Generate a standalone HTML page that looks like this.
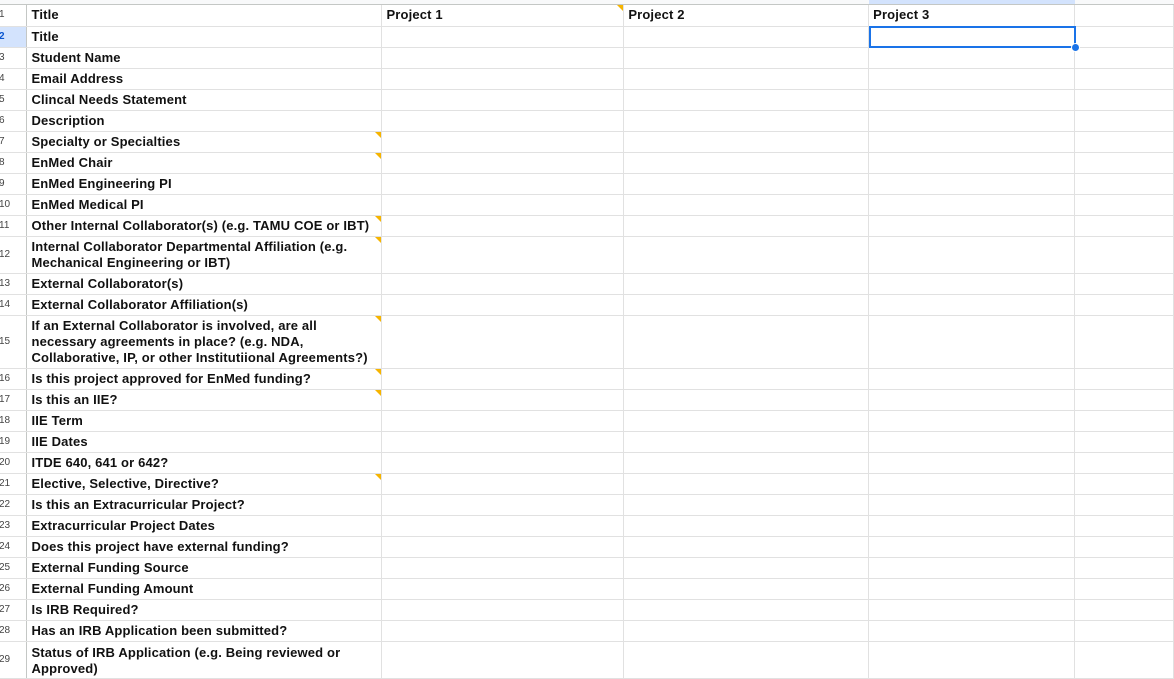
<!DOCTYPE html>
<html><head><style>
body{margin:0;width:1174px;height:665px;overflow:hidden;background:#fff;font-family:"Liberation Sans",Arial,sans-serif;position:relative}
.hdr{position:absolute;left:0;top:0;width:1174px;height:4px;background:#f8f9fa;border-bottom:1px solid #c4c7c5}
table{position:absolute;left:0;top:5px;border-collapse:collapse;table-layout:fixed}
td{border:1px solid #e1e1e1;padding:0 0 0 4px;font-size:13px;font-weight:bold;color:#111;vertical-align:middle;line-height:16px;position:relative;overflow:visible;letter-spacing:0.15px;white-space:nowrap}
td.n{font-weight:normal;font-size:10px;color:#444;padding-left:0;border-left:none;background:#fff;border-right:1px solid #c4c7c5;text-indent:-1px;letter-spacing:0}
tr:first-child td{border-top:none}
.t::after{content:"";position:absolute;right:0;top:0;border-top:6px solid #f6b400;border-left:6px solid transparent}
.sel{position:absolute;left:869px;top:26px;width:203px;height:18px;border:2px solid #1a73e8}
.dot{position:absolute;left:1071px;top:43px;width:7px;height:7px;border-radius:50%;background:#1a73e8;border:1px solid #fff}
</style></head><body>
<div class="hdr"></div>
<div style="position:absolute;left:869px;top:0;width:206px;height:4px;background:#d3e3fd"></div>
<table>
<colgroup><col style="width:27px"><col style="width:355px"><col style="width:242px"><col style="width:245px"><col style="width:206px"><col style="width:99px"></colgroup>
<tr style="height:21px"><td class="n">1</td><td>Title</td><td class="t">Project 1</td><td>Project 2</td><td>Project 3</td><td></td></tr>
<tr style="height:21px"><td class="n" style="background:#d3e3fd;font-weight:bold;color:#0b57d0">2</td><td>Title</td><td></td><td></td><td></td><td></td></tr>
<tr style="height:21px"><td class="n">3</td><td>Student Name</td><td></td><td></td><td></td><td></td></tr>
<tr style="height:21px"><td class="n">4</td><td>Email Address</td><td></td><td></td><td></td><td></td></tr>
<tr style="height:21px"><td class="n">5</td><td>Clincal Needs Statement</td><td></td><td></td><td></td><td></td></tr>
<tr style="height:21px"><td class="n">6</td><td>Description</td><td></td><td></td><td></td><td></td></tr>
<tr style="height:21px"><td class="n">7</td><td class="t">Specialty or Specialties</td><td></td><td></td><td></td><td></td></tr>
<tr style="height:21px"><td class="n">8</td><td class="t">EnMed Chair</td><td></td><td></td><td></td><td></td></tr>
<tr style="height:21px"><td class="n">9</td><td>EnMed Engineering PI</td><td></td><td></td><td></td><td></td></tr>
<tr style="height:21px"><td class="n">10</td><td>EnMed Medical PI</td><td></td><td></td><td></td><td></td></tr>
<tr style="height:21px"><td class="n">11</td><td class="t">Other Internal Collaborator(s) (e.g. TAMU COE or IBT)</td><td></td><td></td><td></td><td></td></tr>
<tr style="height:37px"><td class="n">12</td><td class="t">Internal Collaborator Departmental Affiliation (e.g.<br>Mechanical Engineering or IBT)</td><td></td><td></td><td></td><td></td></tr>
<tr style="height:21px"><td class="n">13</td><td>External Collaborator(s)</td><td></td><td></td><td></td><td></td></tr>
<tr style="height:21px"><td class="n">14</td><td>External Collaborator Affiliation(s)</td><td></td><td></td><td></td><td></td></tr>
<tr style="height:53px"><td class="n">15</td><td class="t">If an External Collaborator is involved, are all<br>necessary agreements in place? (e.g. NDA,<br>Collaborative, IP, or other Institutiional Agreements?)</td><td></td><td></td><td></td><td></td></tr>
<tr style="height:21px"><td class="n">16</td><td class="t">Is this project approved for EnMed funding?</td><td></td><td></td><td></td><td></td></tr>
<tr style="height:21px"><td class="n">17</td><td class="t">Is this an IIE?</td><td></td><td></td><td></td><td></td></tr>
<tr style="height:21px"><td class="n">18</td><td>IIE Term</td><td></td><td></td><td></td><td></td></tr>
<tr style="height:21px"><td class="n">19</td><td>IIE Dates</td><td></td><td></td><td></td><td></td></tr>
<tr style="height:21px"><td class="n">20</td><td>ITDE 640, 641 or 642?</td><td></td><td></td><td></td><td></td></tr>
<tr style="height:21px"><td class="n">21</td><td class="t">Elective, Selective, Directive?</td><td></td><td></td><td></td><td></td></tr>
<tr style="height:21px"><td class="n">22</td><td>Is this an Extracurricular Project?</td><td></td><td></td><td></td><td></td></tr>
<tr style="height:21px"><td class="n">23</td><td>Extracurricular Project Dates</td><td></td><td></td><td></td><td></td></tr>
<tr style="height:21px"><td class="n">24</td><td>Does this project have external funding?</td><td></td><td></td><td></td><td></td></tr>
<tr style="height:21px"><td class="n">25</td><td>External Funding Source</td><td></td><td></td><td></td><td></td></tr>
<tr style="height:21px"><td class="n">26</td><td>External Funding Amount</td><td></td><td></td><td></td><td></td></tr>
<tr style="height:21px"><td class="n">27</td><td>Is IRB Required?</td><td></td><td></td><td></td><td></td></tr>
<tr style="height:21px"><td class="n">28</td><td>Has an IRB Application been submitted?</td><td></td><td></td><td></td><td></td></tr>
<tr style="height:37px"><td class="n">29</td><td style="vertical-align:top;padding-top:3px">Status of IRB Application (e.g. Being reviewed or<br>Approved)</td><td></td><td></td><td></td><td></td></tr>
</table>
<div class="sel"></div>
<div class="dot"></div>
</body></html>
